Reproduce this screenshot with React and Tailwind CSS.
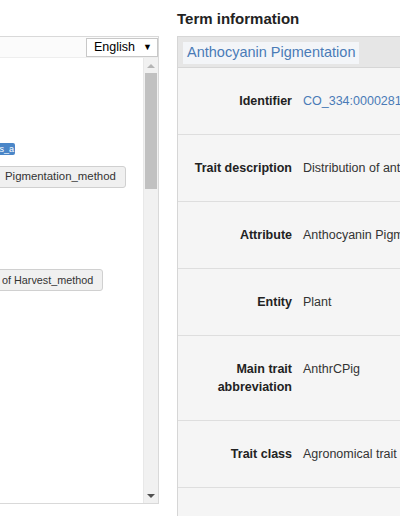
import React from 'react';

const rows = [
  { label: ['Identifier'], value: 'CO_334:0000281', link: true },
  { label: ['Trait description'], value: 'Distribution of anthocyanin pigmentation in the plant' },
  { label: ['Attribute'], value: 'Anthocyanin Pigmentation' },
  { label: ['Entity'], value: 'Plant' },
  { label: ['Main trait', 'abbreviation'], value: 'AnthrCPig' },
  { label: ['Trait class'], value: 'Agronomical trait' },
  { label: [''], value: '' },
];

function Scrollbar() {
  return (
    <div className="w-[15px] flex flex-col bg-[#f1f1f1] border-l border-[#e8e8e8]">
      <div className="h-[15px] flex items-center justify-center">
        <div className="w-0 h-0 border-l-[4px] border-r-[4px] border-b-[4px] border-l-transparent border-r-transparent border-b-[#b5b5b5]" />
      </div>
      <div className="mx-[1px] h-[116px] bg-[#c1c1c1]" />
      <div className="flex-1" />
      <div className="h-[15px] flex items-center justify-center">
        <div className="w-0 h-0 border-l-[4px] border-r-[4px] border-t-[4px] border-l-transparent border-r-transparent border-t-[#505050]" />
      </div>
    </div>
  );
}

export default function App() {
  return (
    <div className="w-[400px] h-[516px] overflow-hidden bg-white flex font-['Liberation_Sans',Arial,sans-serif] text-[#333]">
      {/* tree panel */}
      <div className="w-[159px] shrink-0 mt-[36px] h-[468px] border-t border-r border-b border-[#d9d9d9] flex flex-col">
        <div className="h-[21px] flex justify-end items-start pt-[1px] bg-[#fbfbfb] border-b border-[#eeeeee]">
          <div className="w-[72px] h-[19px] border border-[#c8c8c8] bg-white flex items-center justify-between pl-[7px] pr-[5px] text-[12.5px] text-black">
            <span>English</span>
            <span className="text-[9px]">▼</span>
          </div>
        </div>
        <div className="flex-1 flex overflow-hidden">
          <div className="flex-1 flex flex-col items-start overflow-hidden">
            <div className="mt-[85px] h-[12px] w-[15px] bg-[#4a86c8] rounded-r-[2px] text-white text-[9px] leading-[12px] overflow-hidden flex justify-end pr-[1px]">
              <span className="whitespace-nowrap">s_a</span>
            </div>
            <div className="mt-[11px] -ml-[6px] h-[22px] flex items-center pl-[10px] pr-[9px] bg-[#f0f0f0] border border-[#d0d0d0] rounded-[3px] text-[11.4px] text-[#333] whitespace-nowrap">
              Pigmentation_method
            </div>
            <div className="mt-[81px] -ml-[6px] h-[22px] flex items-center pl-[7px] pr-[9px] bg-[#f0f0f0] border border-[#d0d0d0] rounded-[3px] text-[10.8px] text-[#333] whitespace-nowrap">
              of Harvest_method
            </div>
          </div>
          <Scrollbar />
        </div>
      </div>

      {/* term information */}
      <div className="ml-[18px] shrink-0 w-[430px]">
        <h2 className="mt-[10px] text-[15px] leading-[18px] font-bold text-[#222]">Term information</h2>
        <div className="mt-[8px] border-l border-t border-[#d6d6d6]">
          <div className="h-[31px] flex items-center bg-[#e6e6e6] border-b border-[#d6d6d6] pl-[5px] pt-[1px]">
            <span className="h-[22px] flex items-center bg-[#f3f5f8] px-[4px] text-[14.5px] text-[#4a7bb7]">
              Anthocyanin Pigmentation
            </span>
          </div>
          {rows.map((r, i) => (
            <div key={i} className="flex bg-[#f5f5f5] border-b border-[#dedede] text-[12.5px] leading-[18px]">
              <div className="w-[119px] shrink-0 pr-[5px] py-[24px] text-right font-bold text-[#222]">
                {r.label.map((l, j) => (
                  <div key={j}>{l || '\u00a0'}</div>
                ))}
              </div>
              <div className={'pl-[6px] py-[24px] whitespace-nowrap ' + (r.link ? 'text-[#4a7bb7]' : 'text-[#333]')}>
                {r.value}
              </div>
            </div>
          ))}
        </div>
      </div>
    </div>
  );
}
